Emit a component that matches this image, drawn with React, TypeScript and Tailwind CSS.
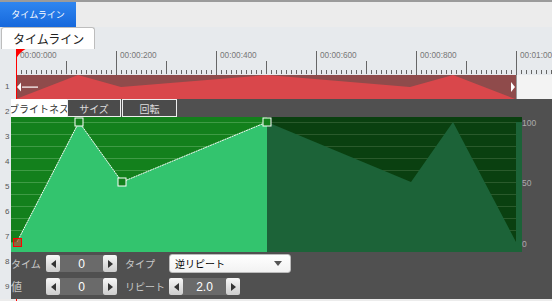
import React from "react";

function Arrow({ dir }: { dir: "left" | "right" }) {
  return (
    <div className="flex h-full w-[14px] items-center justify-center rounded-[2px] bg-linear-to-b from-[#f7f7f7] to-[#cdcdcd]">
      <svg width="5" height="8" viewBox="0 0 5 8">
        {dir === "left" ? (
          <path d="M5 0 L0 4 L5 8 Z" fill="#333" />
        ) : (
          <path d="M0 0 L5 4 L0 8 Z" fill="#333" />
        )}
      </svg>
    </div>
  );
}

function Spinner({ value }: { value: string }) {
  return (
    <div className="flex h-[17px] w-[71px]">
      <Arrow dir="left" />
      <div className="flex flex-1 items-center justify-center bg-[#6a6a6a] font-['Liberation_Sans',sans-serif] text-[12px] leading-none text-white">
        {value}
      </div>
      <Arrow dir="right" />
    </div>
  );
}

function Ruler() {
  const rects: React.ReactNode[] = [];
  for (let X = 0; X <= 536; X += 5) {
    if (X % 100 === 0) {
      rects.push(<rect key={X} x={X} y={2} width={1} height={24} fill="#666" />);
    } else if (X % 50 === 0) {
      rects.push(<rect key={X} x={X} y={12} width={1} height={13} fill="#666" />);
    } else {
      rects.push(<rect key={X} x={X} y={21} width={1} height={4} fill="#666" />);
    }
  }
  const labels = ["00:00:000", "00:00:200", "00:00:400", "00:00:600", "00:00:800", "00:01:000"];
  return (
    <svg width="536" height="26" viewBox="0 0 536 26">
      {rects}
      {labels.map((l, i) => (
        <text
          key={l}
          x={i * 100 + 4}
          y={8.5}
          fontSize="8.25"
          fill="#777"
          fontFamily="Liberation Sans, sans-serif"
        >
          {l}
        </text>
      ))}
    </svg>
  );
}

function Track() {
  return (
    <svg width="500" height="24" viewBox="0 0 500 24">
      <rect x="0" y="0" width="500" height="24" fill="#8f4b4b" />
      <polygon points="0,24 62,0 105,12 251,0 394,12 437,0 499,24" fill="#d9474b" />
      <path d="M1 12 L5 7.5 L5 16.5 Z" fill="#fff" />
      <rect x="6" y="11.5" width="16" height="1.2" fill="#fff" />
      <path d="M495 7 L499 12 L495 17 Z" fill="#fff" />
    </svg>
  );
}

function Chart() {
  const grid: number[] = [];
  for (let y = 122; y <= 242; y += 12) grid.push(y);
  return (
    <svg width="541" height="135" viewBox="11 117 541 135">
      <rect x="11" y="117" width="256" height="135" fill="#13801c" />
      <rect x="267" y="117" width="255" height="135" fill="#0a4010" />
      {grid.map((y) => (
        <rect key={"l" + y} x="11" y={y} width="256" height="1" fill="#3f9b45" />
      ))}
      {grid.map((y) => (
        <rect key={"r" + y} x="267" y={y} width="249" height="1" fill="#2a5a2c" />
      ))}
      <polygon points="11,252 11,243 17,242 79,122 122,182 267,122 267,252" fill="#33c46e" />
      <polygon points="267,122 411,182 453,122 516,242 516,252 267,252" fill="#1c6338" />
      <rect x="516" y="122" width="6" height="130" fill="#1c6338" />
      <polyline
        points="17,242 79,122 122,182 267,122"
        fill="none"
        stroke="#fff"
        strokeWidth="1"
        strokeDasharray="2 0.6"
      />
      <rect x="75" y="118" width="8" height="8" fill="#13801c" stroke="#fff" strokeWidth="1" />
      <rect x="118" y="178" width="8" height="8" fill="#13801c" stroke="#fff" strokeWidth="1" />
      <rect x="263" y="118" width="8" height="8" fill="#13801c" stroke="#fff" strokeWidth="1" />
      <rect
        x="13.5"
        y="238.5"
        width="8"
        height="8"
        fill="rgba(190,50,30,0.6)"
        stroke="#f00"
        strokeWidth="1"
      />
      <text x="522" y="126" fontSize="8.5" fill="#ababab" fontFamily="Liberation Sans, sans-serif">
        100
      </text>
      <text x="522" y="186" fontSize="8.5" fill="#ababab" fontFamily="Liberation Sans, sans-serif">
        50
      </text>
      <text x="522" y="247" fontSize="8.5" fill="#ababab" fontFamily="Liberation Sans, sans-serif">
        0
      </text>
    </svg>
  );
}

export default function App() {
  const nums = ["2", "3", "4", "5", "6", "7", "8", "9"];
  return (
    <div className="relative flex h-[301px] w-[552px] flex-col overflow-hidden bg-[#ececec] font-['Noto_Sans_CJK_JP',sans-serif]">
      <div className="h-[2px] shrink-0 bg-[#9b9b9b]" />
      <div className="flex h-[25px] shrink-0 bg-[#ececec]">
        <div className="flex w-[76px] items-center justify-center bg-linear-to-b from-[#2f86f0] to-[#1668dc] text-[9px] text-white">
          タイムライン
        </div>
      </div>
      <div className="flex h-[22px] shrink-0 items-end bg-[#e7eaed] pl-[1px]">
        <div className="flex h-[22px] w-[94px] items-center rounded-t-[3px] border border-b-0 border-[#bdbdbd] bg-white pl-[11px] text-[12px] text-[#222]">
          タイムライン
        </div>
      </div>
      <div className="flex h-[26px] shrink-0 bg-[#e7eaed]">
        <div className="w-[16px] shrink-0" />
        <Ruler />
      </div>
      <div className="flex h-[24px] shrink-0 bg-[#e7eaed]">
        <div className="flex w-[16px] shrink-0 items-center pl-[5px] font-['Liberation_Sans',sans-serif] text-[8px] text-[#555]">
          1
        </div>
        <Track />
        <div className="flex-1 border-l border-[#9a9a9a] bg-[#f3f3f3]" />
      </div>
      <div className="flex h-[200px] shrink-0">
        <div className="flex w-[11px] shrink-0 flex-col bg-[#e7eaed]">
          {nums.map((n) => (
            <div
              key={n}
              className="flex h-[25px] items-center pl-[5px] font-['Liberation_Sans',sans-serif] text-[8px] text-[#555]"
            >
              {n}
            </div>
          ))}
        </div>
        <div className="relative z-10 flex flex-1 flex-col bg-[#505050]">
          <div className="flex h-[18px] shrink-0 text-[10px]">
            <div className="flex w-[56px] items-center justify-center overflow-hidden whitespace-nowrap bg-white text-[#333]">
              ブライトネス
            </div>
            <div className="flex w-[54px] items-center justify-center border border-[#eee] bg-[#4b4b4b] text-[#ddd]">
              サイズ
            </div>
            <div className="ml-[1px] flex w-[55px] items-center justify-center border border-[#eee] bg-[#4b4b4b] text-[#ddd]">
              回転
            </div>
          </div>
          <Chart />
          <div className="flex h-[23px] shrink-0 items-center text-[10px] text-[#c8c8c8]">
            <div className="w-[35px]">タイム</div>
            <Spinner value="0" />
            <div className="ml-[8px] w-[44px]">タイプ</div>
            <div className="flex h-[19px] w-[122px] items-center justify-between rounded-[3px] border border-[#bbb] bg-linear-to-b from-white to-[#f2f2f2] pl-[5px] pr-[8px] text-black">
              <span>逆リピート</span>
              <svg width="8" height="5" viewBox="0 0 8 5">
                <path d="M0 0 L8 0 L4 5 Z" fill="#555" />
              </svg>
            </div>
          </div>
          <div className="flex h-[23px] shrink-0 items-center text-[10px] text-[#c8c8c8]">
            <div className="w-[35px] text-[11px]">値</div>
            <Spinner value="0" />
            <div className="ml-[8px] w-[44px]">リピート</div>
            <Spinner value="2.0" />
          </div>
        </div>
      </div>
      <div className="flex-1 bg-[#ececec]" />
      <div className="pointer-events-none absolute left-[16px] top-[49px] z-[5] h-[252px] w-[1px] bg-[#f00]" />
      <svg className="absolute left-[16px] top-[49px] z-[6]" width="10" height="10" viewBox="0 0 10 10">
        <path d="M0 0 H9.5 Q4 3 0 9.5 Z" fill="#f00" />
      </svg>
    </div>
  );
}
